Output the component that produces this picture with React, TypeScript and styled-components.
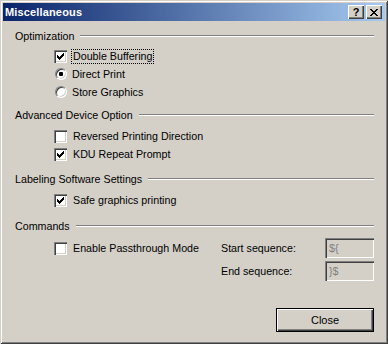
import React from 'react';
import styled, { createGlobalStyle } from 'styled-components';

const Global = createGlobalStyle`
  html, body { margin: 0; padding: 0; background: #D4D0C8; }
  body { font-family: "Liberation Sans", Arial, sans-serif; font-size: 10.7px; color: #000; }
  * { box-sizing: border-box; }
`;

const Window = styled.div`
  width: 388px;
  height: 344px;
  padding: 3px;
  background: #D4D0C8;
  box-shadow: inset 1px 1px #D4D0C8, inset -1px -1px #404040, inset 2px 2px #ffffff, inset -2px -2px #808080;
  display: flex;
  flex-direction: column;
`;

const TitleBar = styled.div`
  height: 18px;
  display: flex;
  align-items: center;
  padding: 0 3px 0 2px;
  background: linear-gradient(to right, #0A246A, #A6CAF0);
`;

const Title = styled.span`
  flex: 1;
  color: #fff;
  font-weight: bold;
  font-size: 11px;
  letter-spacing: 0.15px;
`;

const TitleButtons = styled.div`
  display: flex;
  gap: 2px;
`;

const TitleButton = styled.div`
  width: 16px;
  height: 14px;
  background: #D4D0C8;
  box-shadow: inset 1px 1px #ffffff, inset -1px -1px #404040, inset -2px -2px #808080;
  display: flex;
  align-items: center;
  justify-content: center;
  font-weight: bold;
  font-size: 11px;
  line-height: 14px;
  color: #000;
`;

const Body = styled.div`
  flex: 1;
  display: flex;
  flex-direction: column;
  padding: 8px 11px 0 12px;
`;

const Header = styled.div<{ $mt: number }>`
  display: flex;
  align-items: center;
  height: 14px;
  margin-top: ${(p) => p.$mt}px;
`;

const Rule = styled.div`
  flex: 1;
  margin-left: 6px;
  height: 2px;
  border-top: 1px solid #808080;
  border-bottom: 1px solid #ffffff;
`;

const Rows = styled.div<{ $mt: number }>`
  display: flex;
  flex-direction: column;
  margin-top: ${(p) => p.$mt}px;
`;

const Row = styled.div`
  display: flex;
  align-items: center;
  height: 18px;
  padding-left: 39px;
  gap: 4px;
`;

const Label = styled.span<{ $focus?: boolean }>`
  padding: 0 1px;
  line-height: 13px;
  border: 1px ${(p) => (p.$focus ? 'dotted #000' : 'solid transparent')};
`;

const Box = styled.span`
  width: 13px;
  height: 13px;
  flex: none;
  background: #fff;
  box-shadow: inset 1px 1px #808080, inset 2px 2px #404040, inset -1px -1px #ffffff, inset -2px -2px #D4D0C8;
  display: flex;
  align-items: center;
  justify-content: center;
`;

const Radio = styled.span<{ $on?: boolean }>`
  position: relative;
  width: 12px;
  height: 12px;
  flex: none;
  margin-left: 1px;
  margin-right: -1px;
  border-radius: 50%;
  background: #fff;
  border: 1px solid;
  border-color: #808080 #ffffff #ffffff #808080;
  box-shadow: inset 1px 1px #404040, inset -1px -1px #D4D0C8;
  &::after {
    content: '';
    display: ${(p) => (p.$on ? 'block' : 'none')};
    position: absolute;
    left: 3px;
    top: 3px;
    width: 4px;
    height: 4px;
    border-radius: 1px;
    background: #000;
  }
`;

const CmdGrid = styled.div`
  display: grid;
  grid-template-columns: 167px 104px 49px;
  grid-auto-rows: 20px;
  row-gap: 3px;
  align-items: center;
  padding-left: 39px;
  margin-top: 5px;
`;

const CmdCheck = styled.div`
  display: flex;
  align-items: center;
  gap: 4px;
`;

const SeqInput = styled.input`
  width: 49px;
  height: 20px;
  margin: 0;
  border: none;
  outline: none;
  padding: 0 0 0 4px;
  font-family: "Liberation Sans", Arial, sans-serif;
  font-size: 10.7px;
  color: #808080;
  -webkit-text-fill-color: #808080;
  background: #D4D0C8;
  box-shadow: inset 1px 1px #808080, inset 2px 2px #404040, inset -1px -1px #ffffff, inset -2px -2px #D4D0C8;
`;

const Footer = styled.div`
  display: flex;
  justify-content: flex-end;
  margin-top: 27px;
`;

const CloseButton = styled.button`
  width: 98px;
  height: 24px;
  margin: 0;
  padding: 0;
  border: 1px solid #000;
  background: #D4D0C8;
  font-family: "Liberation Sans", Arial, sans-serif;
  font-size: 11px;
  color: #000;
  box-shadow: inset 1px 1px #ffffff, inset -1px -1px #404040, inset -2px -2px #808080;
`;

const Check = () => (
  <svg width="7" height="7" viewBox="0 0 7 7" shapeRendering="crispEdges">
    <rect x="0" y="2" width="1" height="3" fill="#000" />
    <rect x="1" y="3" width="1" height="3" fill="#000" />
    <rect x="2" y="4" width="1" height="3" fill="#000" />
    <rect x="3" y="3" width="1" height="3" fill="#000" />
    <rect x="4" y="2" width="1" height="3" fill="#000" />
    <rect x="5" y="1" width="1" height="3" fill="#000" />
    <rect x="6" y="0" width="1" height="3" fill="#000" />
  </svg>
);

const CloseGlyph = () => (
  <svg width="8" height="7" viewBox="0 0 8 7" shapeRendering="crispEdges">
    <rect x="0" y="0" width="2" height="1" fill="#000" />
    <rect x="6" y="0" width="2" height="1" fill="#000" />
    <rect x="1" y="1" width="2" height="1" fill="#000" />
    <rect x="5" y="1" width="2" height="1" fill="#000" />
    <rect x="2" y="2" width="4" height="1" fill="#000" />
    <rect x="3" y="3" width="2" height="1" fill="#000" />
    <rect x="2" y="4" width="4" height="1" fill="#000" />
    <rect x="1" y="5" width="2" height="1" fill="#000" />
    <rect x="5" y="5" width="2" height="1" fill="#000" />
    <rect x="0" y="6" width="2" height="1" fill="#000" />
    <rect x="6" y="6" width="2" height="1" fill="#000" />
  </svg>
);

const CheckRow = ({ label, checked, focus }: { label: string; checked?: boolean; focus?: boolean }) => (
  <Row>
    <Box>{checked && <Check />}</Box>
    <Label $focus={focus}>{label}</Label>
  </Row>
);

const RadioRow = ({ label, on }: { label: string; on?: boolean }) => (
  <Row>
    <Radio $on={on} />
    <Label>{label}</Label>
  </Row>
);

const Section = ({ title, mt }: { title: string; mt: number }) => (
  <Header $mt={mt}>
    <span>{title}</span>
    <Rule />
  </Header>
);

export default function App() {
  return (
    <>
      <Global />
      <Window>
        <TitleBar>
          <Title>Miscellaneous</Title>
          <TitleButtons>
            <TitleButton>?</TitleButton>
            <TitleButton>
              <CloseGlyph />
            </TitleButton>
          </TitleButtons>
        </TitleBar>
        <Body>
          <Section title="Optimization" mt={0} />
          <Rows $mt={4}>
            <CheckRow label="Double Buffering" checked focus />
            <RadioRow label="Direct Print" on />
            <RadioRow label="Store Graphics" />
          </Rows>
          <Section title="Advanced Device Option" mt={7} />
          <Rows $mt={5}>
            <CheckRow label="Reversed Printing Direction" />
            <CheckRow label="KDU Repeat Prompt" checked />
          </Rows>
          <Section title="Labeling Software Settings" mt={9} />
          <Rows $mt={5}>
            <CheckRow label="Safe graphics printing" checked />
          </Rows>
          <Section title="Commands" mt={10} />
          <CmdGrid>
            <CmdCheck>
              <Box />
              <Label>Enable Passthrough Mode</Label>
            </CmdCheck>
            <span>Start sequence:</span>
            <SeqInput readOnly value="${" />
            <span />
            <span>End sequence:</span>
            <SeqInput readOnly value="}$" />
          </CmdGrid>
          <Footer>
            <CloseButton>Close</CloseButton>
          </Footer>
        </Body>
      </Window>
    </>
  );
}
